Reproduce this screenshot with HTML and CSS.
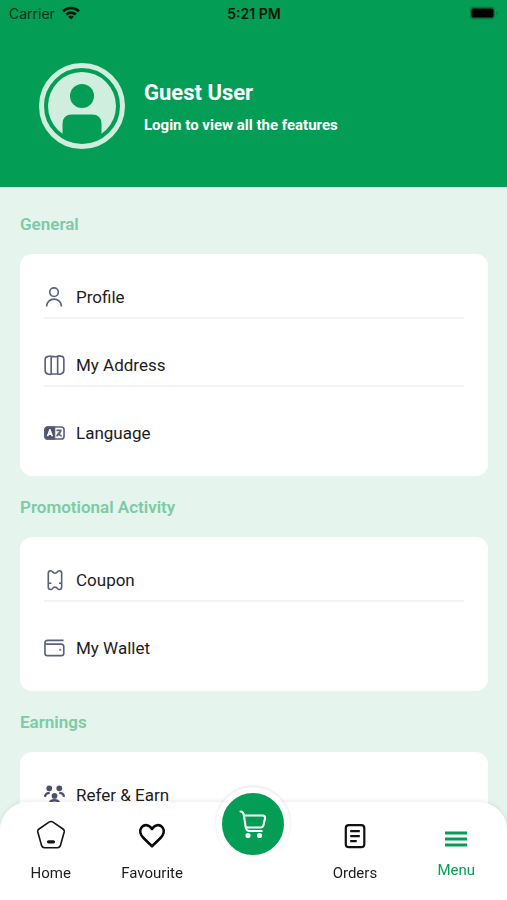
FILE: index.html
```html
<!DOCTYPE html>
<html lang="en">
<head>
<meta charset="utf-8">
<meta name="viewport" content="width=device-width, initial-scale=1">
<title>Menu</title>
<link rel="stylesheet" href="styles.css">
</head>
<body>
<header class="header">
  <div class="status">
    <div class="carrier">
      <span>Carrier</span>
      <svg width="18" height="14" viewBox="0 0 18 14" fill="none" stroke="#03170b" stroke-width="2.6"><path d="M1 5.2a11.5 11.5 0 0 1 16 0M4.2 8.5a7 7 0 0 1 9.6 0"/><path d="M9 13.6 6.2 10.8a4 4 0 0 1 5.600 0z" fill="#03170b" stroke="none"/></svg>
    </div>
    <time class="clock">5:21 PM</time>
    <svg class="battery" width="30" height="14" viewBox="0 0 30 14"><rect x="1" y="0.800" width="25" height="12.400" rx="3.500" fill="#047a3e"/><rect x="2.500" y="2.500" width="22" height="9" rx="2" fill="#000"/><path d="M27.500 5v4q1.500-.6 1.500-2t-1.500-2z" fill="#047a3e"/></svg>
  </div>
  <div class="user">
    <svg class="avatar" width="86" height="86" viewBox="0 0 86 86"><circle cx="43" cy="43" r="34" fill="#cfeedd"/><circle cx="43" cy="33" r="12" fill="#039d55"/><path d="M23.500 78V61q0-9.500 9.500-9.500h20q9.500 0 9.500 9.500v17z" fill="#039d55"/><circle cx="43" cy="43" r="40.500" fill="none" stroke="#cfeedd" stroke-width="5"/></svg>
    <div>
      <h1 class="name">Guest User</h1>
      <p class="hint">Login to view all the features</p>
    </div>
  </div>
</header>

<main class="main">
  <section>
    <h2 class="title">General</h2>
    <ul class="card">
      <li><a class="row" href="#profile">
        <svg class="icon" viewBox="0 0 22 22"><circle cx="10.500" cy="6" r="4.500"/><path d="M2.800 21v-.6a7.700 7.200 0 0 1 15.400 0v.6"/></svg>
        Profile</a></li>
      <li><a class="row" href="#address">
        <svg class="icon" viewBox="0 0 22 22"><path d="M4.500 2Q6 1.200 7.500 2l5.500.3Q15.500 1 17.500 1.700q3.300 0 3.300 3.600v11q0 3.500-3 4-1.900.9-4 0l-6 .1q-1.800.8-3.600 0-3-.4-3-4V5.500q0-3 3.300-3.500zM7.500 2v18.300M14.300 1.800v18.500"/></svg>
        My Address</a></li>
      <li><a class="row" href="#language">
        <svg class="icon" viewBox="0 0 22 22"><rect x="1" y="4.700" width="20" height="12.600" rx="3"/><path d="M11 4.700H4q-3 0-3 3v6.600q0 3 3 3h7z" fill="#4b516d"/><path d="m3.700 14.500 2.500-7 2.500 7M4.700 12.200h3" stroke="#fff"/><path d="M13 8.200h5.500M17.500 8.200q-.8 4-4.500 6M14.500 10.500q1.300 2.500 4 3.900"/></svg>
        Language</a></li>
    </ul>
  </section>
  <section>
    <h2 class="title">Promotional Activity</h2>
    <ul class="card">
      <li><a class="row" href="#coupon">
        <svg class="icon" viewBox="0 0 22 22"><path d="M4.500 14.400V4q0-2.700 2.400-2.700 1.500 0 1.900 1.100 1 1.500 2.700 1.500t2.700-1.500q.4-1.100 1.900-1.100Q18.500 1.300 18.500 4v10.400M4.500 14.400V18.400q0 2.600 2.400 2.600 1.300 0 1.900-1 1-1.500 2.700-1.500t2.700 1.500q.6 1 1.900 1 2.400 0 2.400-2.600v-4M5 14.400h2.800M15.700 14.400h2.800"/></svg>
        Coupon</a></li>
      <li><a class="row" href="#wallet">
        <svg class="icon" viewBox="0 0 22 22"><path d="M20.500 3H4Q1 3 1 5.500v11Q1 19 3.500 19h14.700q2.500 0 2.500-2.500v-7Q20.700 7 18.200 7H3.500Q1 7 1 5.500"/><circle cx="17" cy="13" r=".3"/></svg>
        My Wallet</a></li>
    </ul>
  </section>
  <section>
    <h2 class="title">Earnings</h2>
    <ul class="card">
      <li><a class="row" href="#refer">
        <svg class="icon icon-solid" viewBox="0 0 22 22"><circle cx="5.500" cy="4" r="3"/><circle cx="16" cy="4" r="3"/><circle cx="11" cy="12" r="3"/><path d="M1 13q.5-4.300 5-4.300M21 13q-.5-4.300-5-4.300M6.200 19q1-2.500 4.800-2.500t4.800 2.500"/></svg>
        Refer &amp; Earn</a></li>
    </ul>
  </section>
</main>

<nav class="nav">
  <a class="tab" href="#home">
    <svg width="30" height="30" viewBox="0 0 30 30" fill="none" stroke="#151515" stroke-width="1.600" stroke-linejoin="round"><path d="M13 2.200q2-1.300 4 0l10 6.800q1.600 1.200 1.200 3l-3.700 13.300q-.7 2.400-3 2.400h-13q-2.300 0-3-2.400L1.800 12q-.4-1.800 1.200-3z"/><path d="M12.500 21.800h5" stroke-width="3.200" stroke-linecap="round"/></svg>
    <span>Home</span></a>
  <a class="tab" href="#favourite">
    <svg width="30" height="30" viewBox="0 0 30 30" fill="none" stroke="#080808" stroke-width="2.600" stroke-linejoin="round"><path d="M15 9C12.500 4.600 7 4 4.600 7.200 2 10.600 3.500 15 6.500 18L15 26.200l8.500-8.200c3-3 4.500-7.400 1.900-10.800C23 4 17.500 4.600 15 9z"/></svg>
    <span>Favourite</span></a>
  <div class="slot"><a class="cart" href="#cart" aria-label="Cart">
    <svg width="28" height="30" viewBox="0 0 28 30" fill="none" stroke="#fff" stroke-width="2.100" stroke-linecap="round" stroke-linejoin="round"><path d="M1.500 2.500q2.700 0 3.200 3l2 12.500q.4 4 4 4h12M5.200 6.500h18.300q3 0 2.500 3l-1.500 6.500q-.6 2.500-3 2.500H6.800"/><circle cx="9" cy="26.500" r="1.500" fill="#fff"/><circle cx="20.500" cy="26.500" r="1.500" fill="#fff"/></svg></a></div>
  <a class="tab" href="#orders">
    <svg width="30" height="30" viewBox="0 0 30 30" fill="none" stroke="#111" stroke-width="2.200"><rect x="5.800" y="5.200" width="18.500" height="22" rx="3"/><path d="M10.200 11.200h9.600M10.200 16.200h9.600M10.200 21.200h6.500"/></svg>
    <span>Orders</span></a>
  <a class="tab active" href="#menu" aria-current="page">
    <svg width="24" height="24" viewBox="0 0 24 24" fill="none" stroke="#039d55" stroke-width="2.800"><path d="M1 6h22M1 12h22M1 18h22"/></svg>
    <span>Menu</span></a>
</nav>
</body>
</html>
```
FILE: styles.css
```css
* {
  box-sizing: border-box;
}

body {
  margin: 0;
  height: 100vh;
  overflow: hidden;
  background: #e5f4ec;
  color: #1c1c1e;
  font-family: Roboto, "Liberation Sans", sans-serif;
}

a {
  color: inherit;
  text-decoration: none;
}

svg {
  display: block;
  flex: none;
}

.header {
  padding-bottom: 38px;
  background: #039d55;
  color: #fff;
}

.status {
  display: grid;
  grid-template-columns: 1fr auto 1fr;
  align-items: center;
  height: 26px;
  padding: 0 8px 0 9px;
  color: #03301a;
  font-family: Inter, sans-serif;
  font-size: 14px;
}

.carrier {
  display: flex;
  align-items: center;
  gap: 7px;
}

.clock {
  color: #03170b;
  font-weight: 600;
}

.battery {
  justify-self: end;
}

.user {
  display: flex;
  align-items: center;
  gap: 19px;
  padding: 37px 39px 0;
}

.name {
  margin: 2px 0 8px;
  font-size: 22px;
  line-height: 28px;
  font-weight: 700;
}

.hint {
  margin: 0;
  font-size: 15px;
  line-height: 20px;
  font-weight: 700;
}

.main {
  padding: 6px 19px 0 20px;
}

.title {
  margin: 0;
  padding: 20px 0 19px;
  color: #7bcba5;
  font-size: 17px;
  line-height: 22px;
  font-weight: 600;
}

.card {
  display: grid;
  gap: 3px;
  margin: 0;
  padding: 0 24px 21px;
  border-radius: 12px;
  background: #fff;
  list-style: none;
}

.row {
  display: flex;
  align-items: center;
  gap: 11px;
  padding: 32px 0 9px;
  border-bottom: 2px solid #f3f3f4;
  font-size: 17px;
  line-height: 22px;
}

.card li:last-child .row {
  border-color: transparent;
}

.icon {
  width: 21px;
  height: 22px;
  fill: none;
  stroke: #5a6078;
  stroke-width: 1.7;
  stroke-linejoin: round;
}

.icon-solid {
  stroke: #4b516d;
  stroke-width: 2.4;
}

.icon-solid circle {
  fill: #4b516d;
  stroke: none;
}

.nav {
  position: fixed;
  right: 0;
  bottom: 0;
  left: 0;
  display: grid;
  grid-template-columns: repeat(5, 1fr);
  height: 98px;
  padding-top: 18px;
  border-radius: 28px 28px 0 0;
  background: #fff;
  box-shadow: 0 -1px 5px rgba(0, 0, 0, 0.08);
}

.tab {
  display: flex;
  flex-direction: column;
  align-items: center;
  gap: 13px;
  font-size: 15px;
  line-height: 20px;
}

.active {
  padding-top: 7px;
  gap: 9px;
  color: #039d55;
}

.slot {
  display: flex;
  justify-content: center;
}

.cart {
  position: absolute;
  top: -15px;
  display: flex;
  align-items: center;
  justify-content: center;
  width: 74px;
  height: 74px;
  border: 6px solid #fff;
  border-radius: 50%;
  background: #039d55;
  box-shadow: 0 -1px 3px rgba(0, 0, 0, 0.12);
}
```
